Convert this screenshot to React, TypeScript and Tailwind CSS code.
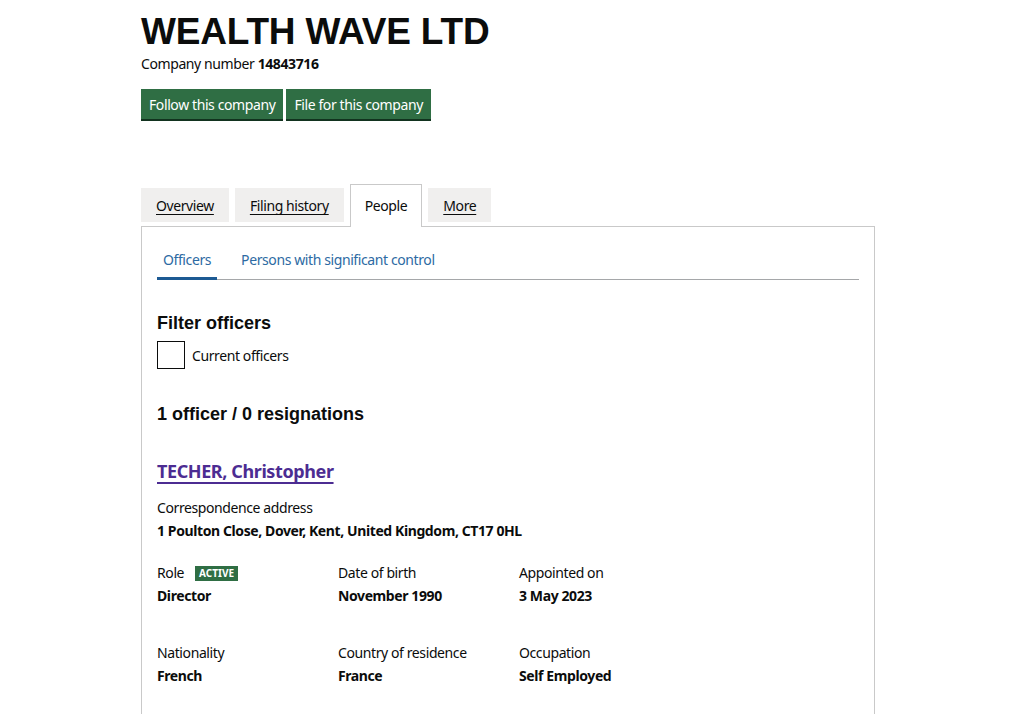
const details = [
  [
    { label: "Role", value: "Director", badge: "ACTIVE" },
    { label: "Date of birth", value: "November 1990" },
    { label: "Appointed on", value: "3 May 2023" },
  ],
  [
    { label: "Nationality", value: "French" },
    { label: "Country of residence", value: "France" },
    { label: "Occupation", value: "Self Employed" },
  ],
];

const tabs = [
  { name: "Overview", active: false },
  { name: "Filing history", active: false },
  { name: "People", active: true },
  { name: "More", active: false },
];

export default function App() {
  return (
    <div className="min-h-[714px] bg-white text-[#0b0c0c] font-['Noto_Sans',sans-serif] tracking-[-0.4px]">
      <div className="ml-[141px] w-[734px] pt-[12px]">
        <h1 className="font-['Liberation_Sans',Arial,sans-serif] font-bold text-[37px] leading-[40px] tracking-[-0.2px]">
          WEALTH WAVE LTD
        </h1>
        <p className="mt-[2px] text-[14px] leading-[20px]">
          Company number <strong className="font-bold">14843716</strong>
        </p>

        <div className="mt-[15px] flex gap-[3px]">
          <button className="h-[30px] px-[8px] bg-[#2f6e44] text-white text-[14px] shadow-[0_2px_0_#12331f]">
            Follow this company
          </button>
          <button className="h-[30px] px-[8px] bg-[#2f6e44] text-white text-[14px] shadow-[0_2px_0_#12331f]">
            File for this company
          </button>
        </div>

        <ul className="mt-[65px] flex items-start gap-[6px]">
          {tabs.map((t) =>
            t.active ? (
              <li
                key={t.name}
                className="relative z-10 -mb-px h-[43px] px-[14px] pt-[10px] bg-white border border-b-0 border-[#c9c9c9] text-[14px]"
              >
                {t.name}
              </li>
            ) : (
              <li
                key={t.name}
                className="mt-[4px] h-[34px] px-[15px] pt-[7px] bg-[#f0efee] text-[14px] underline underline-offset-[3px]"
              >
                {t.name}
              </li>
            )
          )}
        </ul>

        <div className="border border-[#c9c9c9] border-b-0 px-[15px] pb-[30px]">
          <div className="mt-[22px] flex border-b border-[#a5a7a9] text-[14px] text-[#2d6aa3]">
            <span className="px-[6px] pb-[7px] border-b-[3px] border-[#1d5a93] -mb-px">Officers</span>
            <span className="ml-[18px] px-[6px] pb-[7px]">Persons with significant control</span>
          </div>

          <h2 className="mt-[31px] font-['Liberation_Sans',Arial,sans-serif] tracking-normal font-bold text-[18px] leading-[24px]">
            Filter officers
          </h2>
          <label className="mt-[6px] flex items-center gap-[7px] text-[14px]">
            <span className="w-[28px] h-[28px] border-[1.5px] border-[#0b0c0c]" />
            Current officers
          </label>

          <h2 className="mt-[33px] font-['Liberation_Sans',Arial,sans-serif] tracking-normal font-bold text-[18px] leading-[24px]">
            1 officer / 0 resignations
          </h2>

          <a className="mt-[33px] block w-fit text-[#4c2c92] font-bold text-[18px] leading-[24px] underline underline-offset-[4px] decoration-[2px]">
            TECHER, Christopher
          </a>

          <p className="mt-[15px] text-[14px] leading-[20px]">Correspondence address</p>
          <p className="mt-[3px] text-[14px] leading-[20px] font-bold">
            1 Poulton Close, Dover, Kent, United Kingdom, CT17 0HL
          </p>

          {details.map((row, i) => (
            <div key={i} className={`grid grid-cols-[181px_181px_181px] ${i === 0 ? "mt-[22px]" : "mt-[37px]"}`}>
              {row.map((d) => (
                <div key={d.label}>
                  <p className="flex items-center gap-[11px] text-[14px] leading-[20px]">
                    {d.label}
                    {d.badge && (
                      <span className="bg-[#2f6e44] text-white text-[10px] tracking-normal font-bold leading-[15px] px-[4px]">
                        {d.badge}
                      </span>
                    )}
                  </p>
                  <p className="mt-[3px] text-[14px] leading-[20px] font-bold">{d.value}</p>
                </div>
              ))}
            </div>
          ))}
        </div>
      </div>
    </div>
  );
}
